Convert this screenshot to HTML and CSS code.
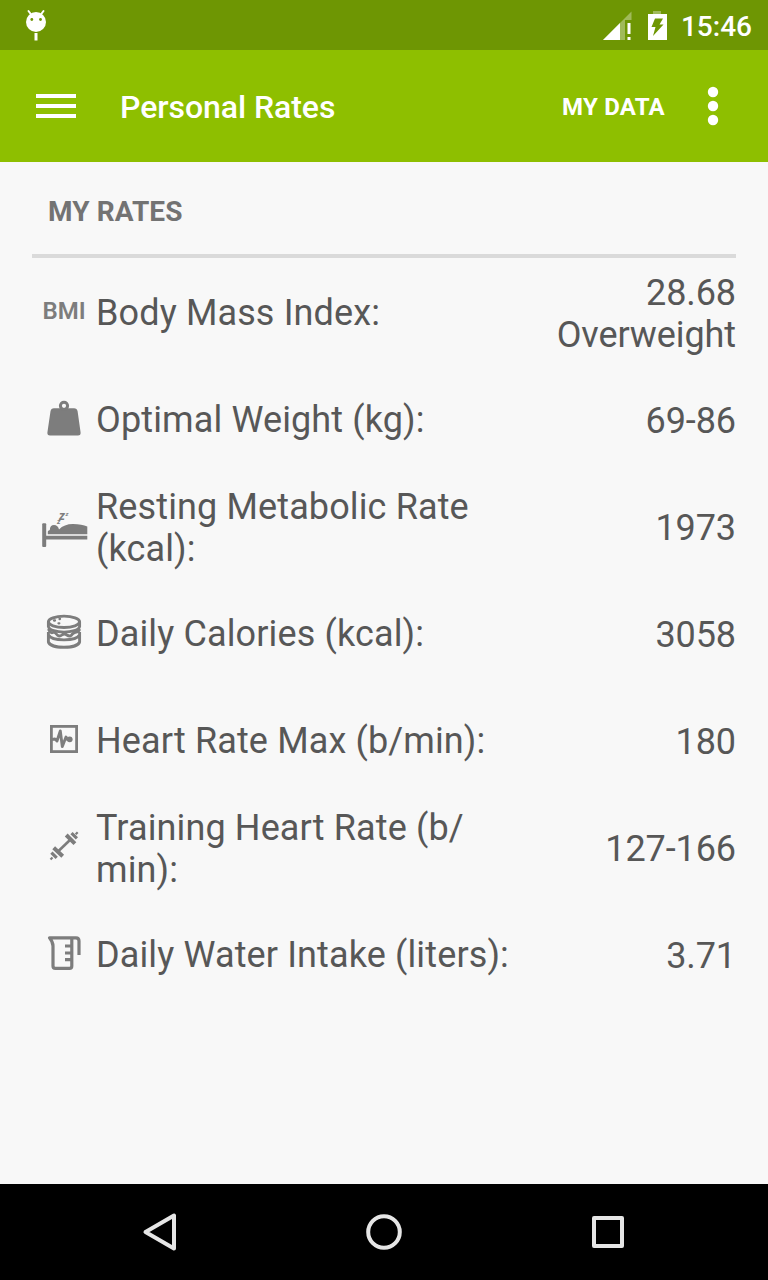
FILE: index.html
```
<!DOCTYPE html>
<html lang="en">
<head>
  <meta charset="UTF-8">
  <meta name="viewport" content="width=device-width, initial-scale=1.0">
  <title>Personal Rates</title>
  <link rel="stylesheet" href="styles.css">
</head>
<body>
  <!-- Status bar -->
  <div class="status-bar">
    <svg width="24" height="34" viewBox="0 0 24 34">
      <circle cx="12" cy="14" r="10" fill="#fff"/>
      <path d="M4.500 3l3 4M19.500 3l-3 4" stroke="#fff" stroke-width="2" stroke-linecap="round"/>
      <path d="M12 25v7.500" stroke="#fff" stroke-width="3"/>
      <circle cx="7.800" cy="11.500" r="1.400" fill="#6e9603"/>
      <circle cx="16.500" cy="11.500" r="1.400" fill="#6e9603"/>
    </svg>
    <div class="status-right">
      <svg width="66" height="32" viewBox="0 0 66 32">
        <path d="M1 30L29.500 1.500V10H23v20z" fill="#fff" fill-opacity=".35"/>
        <path d="M1 30L18 13v17z" fill="#fff"/>
        <path d="M25.500 13h3v11h-3zM25.500 27h3v3h-3z" fill="#fff"/>
        <path d="M51 1h8v3h-8z" fill="#fff" fill-opacity=".35"/>
        <path d="M46 4h19v26H46z" fill="#fff"/>
        <path d="M53 8.500h8l-3.500 6h4L51 26l2.500-9h-4z" fill="#6e9603"/>
      </svg>
      <span class="clock">15:46</span>
    </div>
  </div>

  <!-- Toolbar -->
  <header class="toolbar">
    <svg width="40" height="24" viewBox="0 0 40 24">
      <path d="M0 2h40M0 12h40M0 22h40" stroke="#fff" stroke-width="4"/>
    </svg>
    <h1 class="title">Personal Rates</h1>
    <span class="action">MY DATA</span>
    <svg width="12" height="40" viewBox="0 0 12 40" fill="#fff">
      <circle cx="6" cy="6" r="5.200"/>
      <circle cx="6" cy="20" r="5.200"/>
      <circle cx="6" cy="34" r="5.200"/>
    </svg>
  </header>

  <!-- Rates -->
  <main class="content">
    <h2 class="section-title">MY RATES</h2>
    <ul class="rates">
      <li class="rate">
        <span class="icon bmi">BMI</span>
        <span class="label">Body Mass Index:</span>
        <span class="value">28.68<br>Overweight</span>
      </li>
      <li class="rate">
        <svg class="icon" viewBox="0 0 48 48">
          <path d="M14 13.300h20q3 0 3.600 3L40.600 37.500q.3 2.900-2.600 2.900H10q-2.900 0-2.600-2.900L10.500 16.300q.5-3 3.500-3z" fill="#7d7d7d"/>
          <circle cx="24" cy="10.800" r="3.600" fill="none" stroke="#7d7d7d" stroke-width="3"/>
        </svg>
        <span class="label">Optimal Weight (kg):</span>
        <span class="value">69-86</span>
      </li>
      <li class="rate">
        <svg class="icon" viewBox="0 0 48 48" fill="#7d7d7d">
          <rect x="2.200" y="21.300" width="4" height="23.700" rx="1"/>
          <path d="M6 33.700h41.300v3.800H6z"/>
          <path d="M7.800 32.300V29.500q0-1 2-1.500Q10 23 14 23q4 0 5 4.500Q24 22 33 22q9 0 14.300 2.500v7.800z"/>
          <text class="z" x="19" y="18" font-size="12">z</text>
          <text class="z" x="17" y="22" font-size="7">z</text>
          <text class="z" x="25.500" y="13.500" font-size="6">z</text>
        </svg>
        <span class="label double">Resting Metabolic Rate (kcal):</span>
        <span class="value">1973</span>
      </li>
      <li class="rate">
        <svg class="icon" viewBox="0 0 48 48" fill="none" stroke="#7d7d7d" stroke-width="2.900">
          <ellipse cx="24" cy="12.800" rx="15.600" ry="5.700"/>
          <path d="M8.400 12.500v5C10 25 38 25 39.600 17.500v-5"/>
          <path d="M8.400 20q2 4.500 4.500 3.500 2-1 3.500 1.500 2.500 3.500 5.500 1 2.500-2 5 0 3.500 2.500 5.500-1 2-2 4-2 2.500-.5 3.200-3"/>
          <path d="M8.400 23v3C12 32.500 36 32.500 39.600 26v-3M8.400 26v7c2 7 29.200 7 31.200 0v-7"/>
          <path d="M14 11.500h1M18.500 14.300h.8M19.500 10h.5" stroke-width="2.300" stroke-linecap="round"/>
        </svg>
        <span class="label">Daily Calories (kcal):</span>
        <span class="value">3058</span>
      </li>
      <li class="rate">
        <svg class="icon" viewBox="0 0 48 48" fill="none" stroke="#7d7d7d">
          <rect x="11.400" y="10.400" width="25.200" height="25.200" stroke-width="2.800"/>
          <path d="M12 23.500l3-.5 2 2L20.300 15l2 15.500L26 21l1.500 2.500h2" stroke-width="2.900" stroke-linejoin="round"/>
          <circle cx="29.700" cy="23.300" r="2.900" fill="#7d7d7d" stroke="none"/>
        </svg>
        <span class="label">Heart Rate Max (b/min):</span>
        <span class="value">180</span>
      </li>
      <li class="rate">
        <svg class="icon" viewBox="0 0 48 48" fill="none" stroke="#7d7d7d">
          <path d="M18 28.500L30.500 16.500" stroke-width="2.600"/>
          <path d="M13.700 24.700l9 8.600M26.200 12l8.700 8.600" stroke-width="4"/>
          <path d="M11.400 29.700l5.300 5.200M31.500 10.200l5.400 5.200" stroke-width="3.200"/>
          <path d="M10.500 36.500l2-2M35.700 11.200l2-2" stroke-width="2.200"/>
        </svg>
        <span class="label double">Training Heart Rate (b/<br>min):</span>
        <span class="value">127-166</span>
      </li>
      <li class="rate">
        <svg class="icon" viewBox="0 0 48 48" fill="none" stroke="#7d7d7d" stroke-width="3.200" stroke-linejoin="round">
          <path d="M39 25V11q0-3.200-3-3.200H9.500Q13 12 13 16v20q0 2.300 2.300 2.300h14.200q2.300 0 2.300-2.300V8"/>
          <path d="M25 16h7M25 23h7M25 29.700h7"/>
        </svg>
        <span class="label">Daily Water Intake (liters):</span>
        <span class="value">3.71</span>
      </li>
    </ul>
  </main>

  <!-- Navigation bar -->
  <nav class="nav-bar">
    <svg width="48" height="48" viewBox="0 0 48 48"><path d="M9.500 24L38 7.500v33z"/></svg>
    <svg width="48" height="48" viewBox="0 0 48 48"><circle cx="24" cy="24" r="15.800"/></svg>
    <svg width="48" height="48" viewBox="0 0 48 48"><rect x="10" y="10" width="28" height="28"/></svg>
  </nav>
</body>
</html>
```
FILE: styles.css
```
* {
  box-sizing: border-box;
}
body {
  display: flex;
  flex-direction: column;
  height: 1280px;
  margin: 0;
  font-family: Roboto, sans-serif;
  background-color: #f8f8f8;
  color: #575757;
}
svg {
  display: block;
  flex: none;
}
.status-bar {
  display: flex;
  justify-content: space-between;
  align-items: center;
  height: 50px;
  padding: 0 16px 0 24px;
  background-color: #6e9603;
  color: #fff;
}
.status-right {
  display: flex;
  align-items: center;
  gap: 13px;
  padding-top: 1px;
}
.clock {
  font-size: 28px;
  font-weight: 500;
  line-height: 32px;
  padding-top: 2px;
}
.toolbar {
  display: flex;
  align-items: center;
  height: 112px;
  padding: 0 49px 0 36px;
  background-color: #8ebf00;
  color: #fff;
}
.title {
  flex: 1;
  margin: 2px 0 0 44px;
  font-size: 32px;
  font-weight: 500;
  letter-spacing: -0.06px;
}
.action {
  margin: 2px 42px 0 0;
  font-size: 24px;
  font-weight: 700;
  letter-spacing: 0.25px;
}
.content {
  flex: 1;
  padding: 0 32px;
}
.section-title {
  height: 96px;
  margin: 0;
  padding: 0 16px;
  border-bottom: 4px solid #dadada;
  color: #737373;
  font-size: 28px;
  font-weight: 700;
  line-height: 99px;
  letter-spacing: 0.08px;
}
.rates {
  margin: 0;
  padding: 2px 0 0;
  list-style: none;
}
.rate {
  display: flex;
  align-items: center;
  height: 107px;
  font-size: 36px;
  line-height: 42px;
}
.icon {
  flex: none;
  width: 48px;
  height: 48px;
  margin: 0 8px 4px;
}
.bmi {
  color: #7d7d7d;
  font-size: 24px;
  font-weight: 600;
  line-height: 47px;
  text-align: center;
}
.z {
  font-weight: 700;
  font-style: italic;
}
.label {
  width: 424px;
  padding-bottom: 2px;
  letter-spacing: 0.13px;
}
.label.double {
  padding-bottom: 0;
}
.value {
  flex: 1;
  text-align: right;
  letter-spacing: -0.1px;
}
.nav-bar {
  display: flex;
  justify-content: center;
  align-items: center;
  gap: 176px;
  height: 96px;
  background-color: #000;
}
.nav-bar svg {
  fill: none;
  stroke: #e6e6e6;
  stroke-width: 4;
  stroke-linejoin: round;
}
```
